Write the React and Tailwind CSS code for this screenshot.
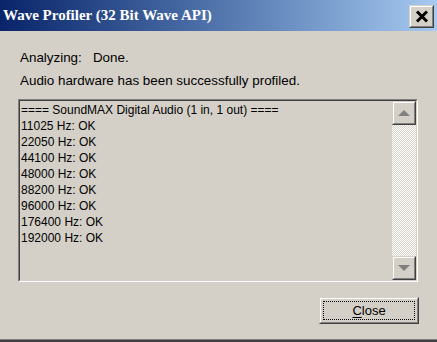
const lines = [
  '==== SoundMAX Digital Audio (1 in, 1 out) ====',
  '11025 Hz: OK',
  '22050 Hz: OK',
  '44100 Hz: OK',
  '48000 Hz: OK',
  '88200 Hz: OK',
  '96000 Hz: OK',
  '176400 Hz: OK',
  '192000 Hz: OK',
]

function Raised({ className = '', children }) {
  return (
    <div className={`border border-t-[#d4d0c8] border-l-[#d4d0c8] border-b-[#404040] border-r-[#404040] ${className}`}>
      <div className="w-full h-full border border-t-white border-l-white border-b-[#808080] border-r-[#808080] bg-[#d4d0c8] flex items-center justify-center">
        {children}
      </div>
    </div>
  )
}

export default function App() {
  return (
    <div className="w-[437px] h-[342px] bg-[#d4d0c8] flex flex-col overflow-hidden font-['Liberation_Sans',Arial,sans-serif] text-[12px] text-black">
      {/* Title bar */}
      <div className="h-[31px] shrink-0 bg-gradient-to-r from-[#0a246a] to-[#a6caf0] flex items-center justify-between pl-[3px] pr-[3px]">
        <span className="font-['Liberation_Serif',serif] font-bold text-[15px] text-white leading-none">
          Wave Profiler (32 Bit Wave API)
        </span>
        <Raised className="w-[25px] h-[23px] mt-[2px]">
          <svg width="14" height="13" viewBox="0 0 14 13">
            <path d="M2 1.5 L12 11.5 M12 1.5 L2 11.5" stroke="black" strokeWidth="3" />
          </svg>
        </Raised>
      </div>

      {/* Body */}
      <div className="flex-1 flex flex-col px-[18px]">
        <div className="pl-[2px] mt-[20px] leading-[13px] text-[13.4px] whitespace-pre">Analyzing:   Done.</div>
        <div className="pl-[2px] mt-[10px] leading-[13px] text-[13.4px]">Audio hardware has been successfully profiled.</div>

        {/* List box */}
        <div className="mt-[12px] w-[400px] h-[183px] border border-t-[#808080] border-l-[#808080] border-b-white border-r-white">
          <div className="w-full h-full border border-t-[#404040] border-l-[#404040] border-b-[#d4d0c8] border-r-[#d4d0c8] flex">
            <div className="flex-1 pl-[1px] pt-[1px]">
              {lines.map((l, i) => (
                <div key={i} className="h-[16px] leading-[16px] whitespace-pre">{l}</div>
              ))}
            </div>
            <div className="w-[24px] flex flex-col">
              <Raised className="h-[24px] shrink-0">
                <svg width="12" height="6" viewBox="0 0 12 6">
                  <path d="M6 0 L12 6 L0 6 Z" fill="#808080" />
                </svg>
              </Raised>
              <div className="flex-1 bg-[repeating-conic-gradient(#ffffff_0%_25%,#d4d0c8_0%_50%)] bg-[length:2px_2px]" />
              <Raised className="h-[24px] shrink-0">
                <svg width="12" height="6" viewBox="0 0 12 6">
                  <path d="M0 0 L12 0 L6 6 Z" fill="#808080" />
                </svg>
              </Raised>
            </div>
          </div>
        </div>

        {/* Close button */}
        <div className="flex justify-end mt-[15px]">
          <Raised className="w-[100px] h-[27px]">
            <div className="w-[92px] h-[19px] border border-dotted border-black flex items-center justify-center text-[13px]">
              <span><span className="underline underline-offset-2">C</span>lose</span>
            </div>
          </Raised>
        </div>
      </div>

      {/* Bottom frame edge */}
      <div className="h-[1px] bg-[#808080] shrink-0" />
      <div className="h-[2px] bg-[#404040] shrink-0" />
    </div>
  )
}
